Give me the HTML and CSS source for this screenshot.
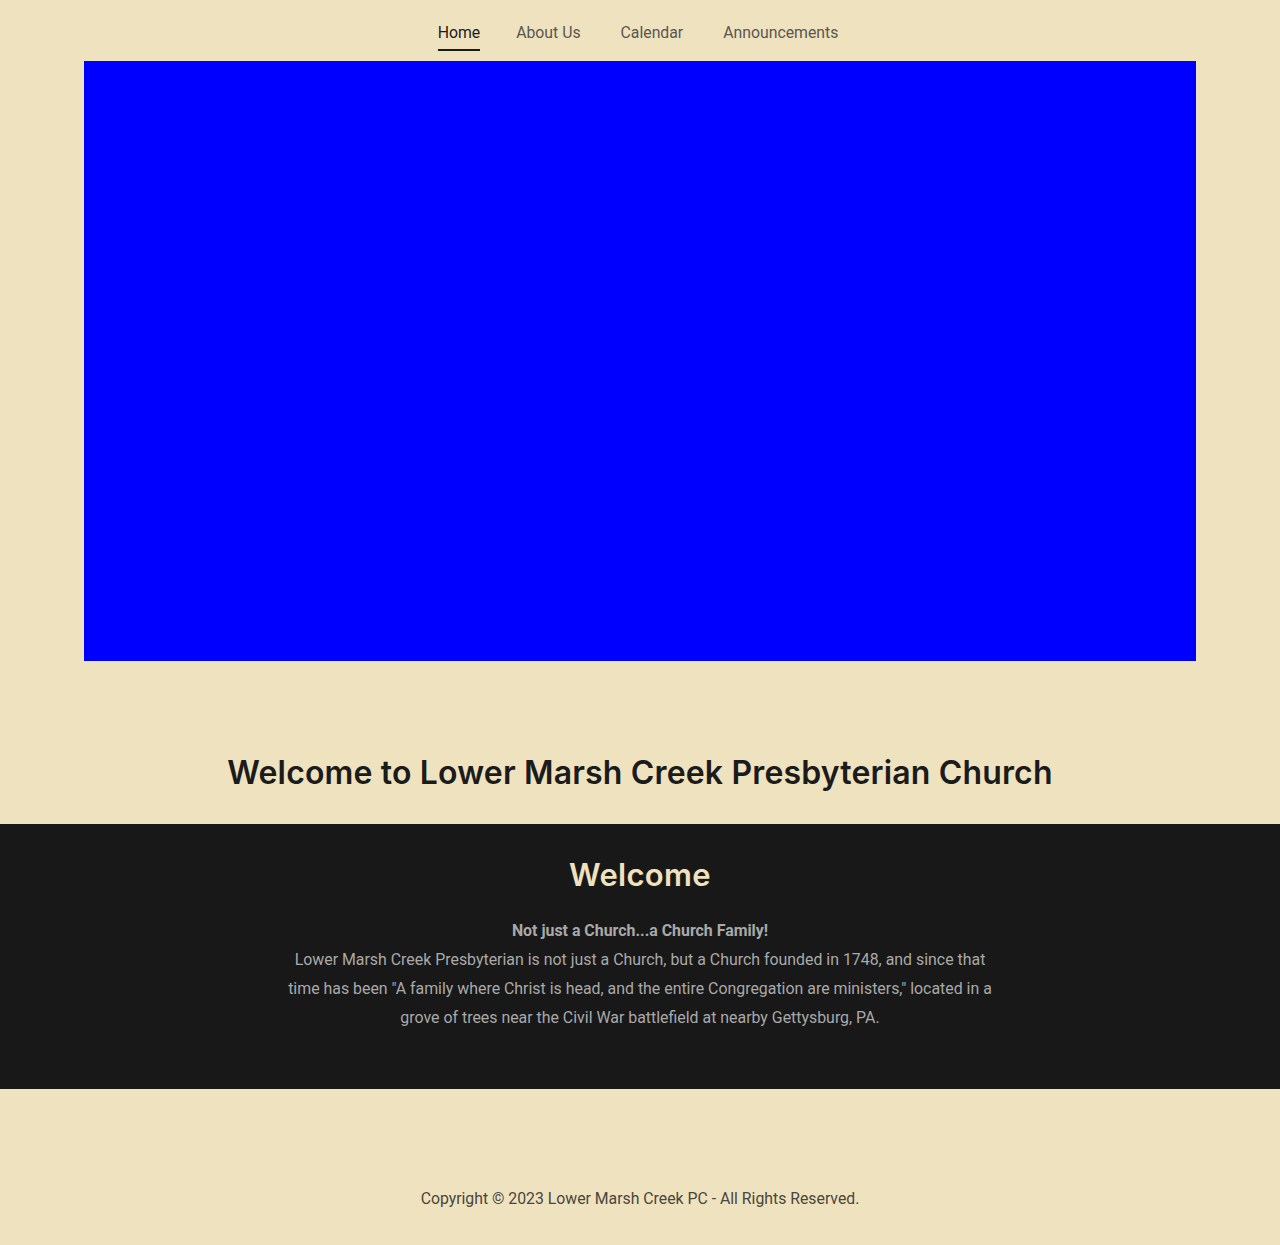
FILE: index.html
```html
<!DOCTYPE html>
<html lang="en">
<head>
<meta charset="utf-8">
<title>Lower Marsh Creek Presbyterian Church</title>
<link rel="stylesheet" href="styles.css">
</head>
<body>
<header class="site-header">
  <nav class="nav">
    <a class="nav-link active" href="#">Home</a>
    <a class="nav-link" href="#">About Us</a>
    <a class="nav-link" href="#">Calendar</a>
    <a class="nav-link" href="#">Announcements</a>
  </nav>
</header>
<section class="hero">
  <div class="hero-media"></div>
</section>
<section class="intro">
  <h1 class="intro-title">Welcome to Lower Marsh Creek Presbyterian Church</h1>
</section>
<section class="welcome">
  <h2 class="welcome-title">Welcome</h2>
  <div class="welcome-text">
    <p class="lead">Not just a Church...a Church Family!</p>
    <p>Lower Marsh Creek Presbyterian is not just a Church, but a Church founded in 1748, and since that time has been "A family where Christ is head, and the entire Congregation are ministers," located in a grove of trees near the Civil War battlefield at nearby Gettysburg, PA.</p>
  </div>
</section>
<footer class="footer">
  <p>Copyright © 2023 Lower Marsh Creek PC - All Rights Reserved.</p>
</footer>
</body>
</html>
```
FILE: styles.css
```css
* { box-sizing: border-box; }
html, body { margin: 0; padding: 0; }
body {
  background: #efe2bf;
  font-family: Roboto, "Liberation Sans", sans-serif;
  color: #1b1b1b;
}
.site-header {
  display: flex;
  justify-content: center;
  padding-top: 22px;
  height: 61px;
}
.nav {
  display: flex;
  gap: 40px;
  margin-left: -4px;
}
.nav-link {
  font-size: 15.8px;
  line-height: 22px;
  color: #5a5650;
  text-decoration: none;
  height: 29px;
  padding-bottom: 5px;
  border-bottom: 2px solid transparent;
}
.nav-link.active {
  color: #1b1b1b;
  border-bottom-color: #1b1b1b;
  margin-right: -4px;
}
.hero {
  padding: 0 84px;
}
.hero-media {
  height: 600px;
  background: #0000ff;
}
.intro {
  padding: 93px 24px 32px;
}
.intro-title {
  margin: 0;
  text-align: center;
  font-family: Inter, "Open Sans", sans-serif;
  font-weight: 600;
  font-size: 32px;
  line-height: 38px;
  letter-spacing: 0.16px;
  color: #1b1b1b;
}
.welcome {
  background: #181818;
  padding: 31px 24px 57px;
  text-align: center;
}
.welcome-title {
  margin: 0 0 21px;
  font-family: Inter, "Open Sans", sans-serif;
  font-weight: 600;
  font-size: 31px;
  line-height: 40px;
  letter-spacing: 0.3px;
  color: #efe2bf;
}
.welcome-text {
  max-width: 712px;
  margin: 0 auto;
  color: #a9a9a9;
  font-size: 15.9px;
  line-height: 29px;
}
.welcome-text p { margin: 0; }
.welcome-text .lead { font-weight: 700; }
.footer {
  padding: 98px 24px 36px;
  text-align: center;
}
.footer p {
  margin: 0;
  font-size: 15.8px;
  line-height: 24px;
  color: #4a4640;
}
```
